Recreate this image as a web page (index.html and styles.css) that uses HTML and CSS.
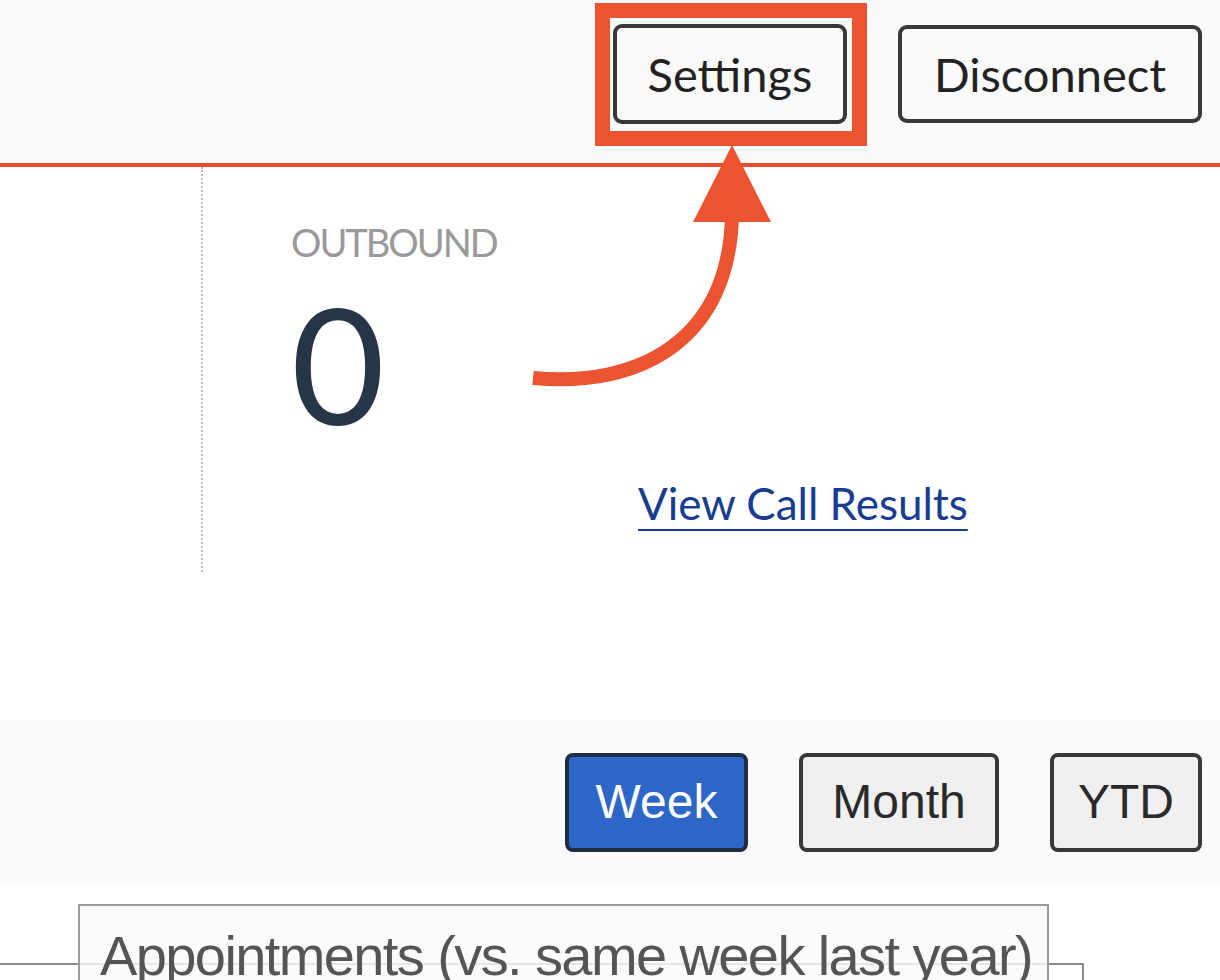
FILE: index.html
```html
<!DOCTYPE html>
<html lang="en">
<head>
<meta charset="utf-8">
<title>Dashboard</title>
<link rel="stylesheet" href="styles.css">
</head>
<body>
<div class="page">
  <header class="topbar">
    <div class="actions">
      <span class="hl-wrap">
        <button class="btn btn-outline btn-settings" type="button">Settings</button>
        <span class="highlight"></span>
      </span>
      <button class="btn btn-outline btn-disconnect" type="button">Disconnect</button>
    </div>
  </header>

  <main class="summary">
    <div class="left-col"></div>
    <div class="stat">
      <div class="stat-label">OUTBOUND</div>
      <div class="stat-value">0</div>
      <a class="stat-link" href="#">View Call Results</a>
    </div>
  </main>

  <section class="range-bar">
    <button class="range-btn range-active" type="button">Week</button>
    <button class="range-btn range-month" type="button">Month</button>
    <button class="range-btn range-ytd" type="button">YTD</button>
  </section>

  <section class="chart">
    <div class="plot"></div>
    <div class="legend">Appointments (vs. same week last year)</div>
  </section>

  <svg class="annot-arrow" width="1220" height="400" viewBox="0 0 1220 400" aria-hidden="true">
    <path d="M533,378 C640,388 730,340 732,214" fill="none" stroke="#eb5431" stroke-width="14"/>
    <polygon points="732,145 693,222 771,222" fill="#eb5431"/>
  </svg>
</div>
</body>
</html>
```

FILE: styles.css
```css
* { box-sizing: border-box; }

html, body {
  margin: 0;
  padding: 0;
  background: #ffffff;
}

.page {
  position: relative;
  width: 1220px;
  height: 980px;
  overflow: hidden;
  font-family: Lato, "Open Sans", sans-serif;
}

/* Header */
.topbar {
  height: 167px;
  background: #fafafa;
  border-bottom: 4px solid #e64e2b;
  display: flex;
  justify-content: flex-end;
  align-items: flex-start;
  padding: 24px 18px 0 0;
}

.actions {
  display: flex;
  align-items: flex-start;
  gap: 51px;
}

.hl-wrap {
  position: relative;
  display: block;
}

.btn {
  display: block;
  font-family: Lato, "Open Sans", sans-serif;
  font-size: 47px;
  color: #222;
  background: #fafafa;
  border: 4px solid #383838;
  border-radius: 9px;
  padding: 0;
  margin: 0;
  line-height: 1;
}

.btn-settings {
  width: 234px;
  height: 100px;
}

.btn-disconnect {
  width: 304px;
  height: 98px;
  margin-top: 1px;
}

.highlight {
  position: absolute;
  left: -18px;
  top: -21px;
  width: 272px;
  height: 143px;
  border: 15px solid #eb5431;
  pointer-events: none;
}

/* Summary */
.summary {
  height: 553px;
  display: flex;
  align-items: flex-start;
}

.left-col {
  width: 203px;
  height: 405px;
  border-right: 2px dotted #bdbdbd;
  flex: none;
}

.stat {
  padding-left: 88px;
  padding-top: 53px;
  display: flex;
  flex-direction: column;
  align-items: flex-start;
}

.stat-label {
  font-size: 38px;
  line-height: 44px;
  color: #9a9a9a;
  letter-spacing: -2px;
}

.stat-value {
  font-size: 162px;
  line-height: 150px;
  color: #263547;
  margin-top: 24px;
}

.stat-link {
  font-size: 44px;
  line-height: 50px;
  color: #173c90;
  text-decoration: underline;
  text-underline-offset: 9px;
  text-decoration-thickness: 2px;
  margin-left: 347px;
  margin-top: 40px;
}

/* Range bar */
.range-bar {
  height: 164px;
  background: #fafafa;
  display: flex;
  justify-content: flex-end;
  align-items: center;
  gap: 51px;
  padding-right: 18px;
}

.range-btn {
  font-family: "Liberation Sans", Arial, sans-serif;
  font-size: 48px;
  line-height: 1;
  height: 99px;
  padding: 0;
  border-radius: 8px;
  border: 4px solid #383838;
  background: #f0f0f0;
  color: #2a2a2a;
}

.range-active {
  width: 183px;
  background: #2c67c8;
  border-color: #1f2d42;
  color: #ffffff;
}

.range-month { width: 200px; }
.range-ytd { width: 152px; }

/* Chart */
.chart {
  position: relative;
  height: 200px;
  padding-top: 79px;
}

.plot {
  width: 1084px;
  height: 200px;
  border-top: 2px solid #8a8a8a;
  border-right: 2px solid #8a8a8a;
}

.legend {
  position: absolute;
  left: 78px;
  top: 20px;
  width: 971px;
  height: 120px;
  border: 2px solid #9a9a9a;
  background: rgba(250, 250, 250, 0.82);
  font-family: "Liberation Sans", Arial, sans-serif;
  font-size: 56px;
  letter-spacing: -1.6px;
  color: #555;
  padding: 22px 0 0 20px;
  line-height: 1;
  white-space: nowrap;
}

.annot-arrow {
  position: absolute;
  left: 0;
  top: 0;
  pointer-events: none;
}
```
